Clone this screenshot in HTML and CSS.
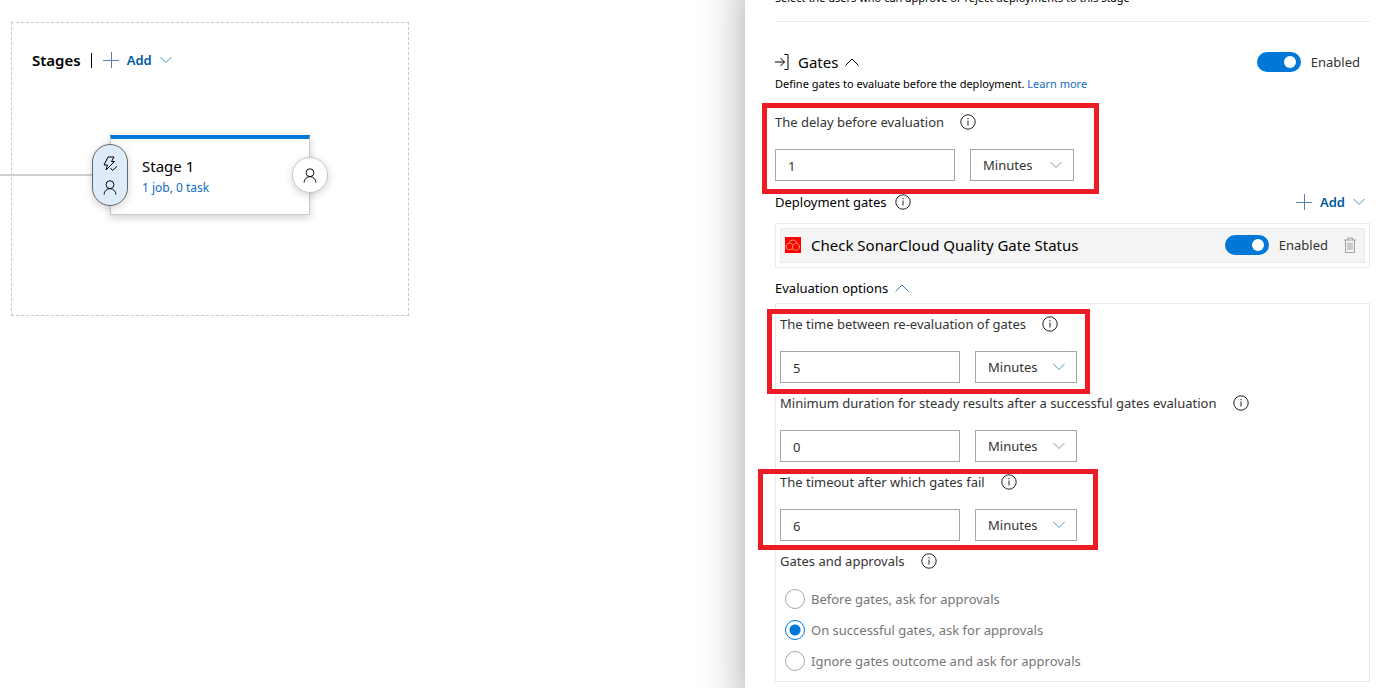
FILE: index.html
```html
<!DOCTYPE html>
<html lang="en">
<head>
<meta charset="utf-8">
<title>Release pipeline - Gates</title>
<link rel="stylesheet" href="styles.css">
</head>
<body>
<svg class="sprite" aria-hidden="true">
  <symbol id="i-plus" viewBox="0 0 16 16"><path d="M8.500 0v16M0 8.500h16"/></symbol>
  <symbol id="i-down" viewBox="0 0 12 8"><path d="M.5 1l5.500 5.500L11.500 1"/></symbol>
  <symbol id="i-up" viewBox="0 0 14 8"><path d="M.5 7.500L7 1l6.500 6.500"/></symbol>
  <symbol id="i-info" viewBox="0 0 16 16"><circle cx="8" cy="8" r="7.200"/><path d="M8 6.500v5M8 4v1.300"/></symbol>
  <symbol id="i-person" viewBox="0 0 14 16"><circle cx="7" cy="5" r="4.200"/><path d="M.7 15.500a6.300 6.300 0 0 1 12.600 0"/></symbol>
</svg>
<div class="workspace">
  <main class="canvas">
    <section class="stages">
      <header class="stages-head">
        <h2 class="stages-title">Stages</h2>
        <span class="divider"></span>
        <button class="add"><svg class="plus"><use href="#i-plus"/></svg>Add<svg class="chevron"><use href="#i-down"/></svg></button>
      </header>
      <span class="connector"></span>
      <article class="stage">
        <h3 class="stage-name">Stage 1</h3>
        <a class="stage-tasks" href="#">1 job, 0 task</a>
        <button class="pre" aria-label="Pre-deployment conditions">
          <svg class="bolt" viewBox="0 0 16 16"><path d="M6 1h6L9.500 5.500h3L4 14l1.500-5H2z"/><path d="M8.500 12l2 2.500L15 10.500"/></svg>
          <svg class="person"><use href="#i-person"/></svg>
        </button>
        <button class="post" aria-label="Post-deployment conditions"><svg class="person"><use href="#i-person"/></svg></button>
      </article>
    </section>
  </main>
  <aside class="panel">
    <p class="note approvals-note">Select the users who can approve or reject deployments to this stage</p>
    <header class="row gates-head">
      <svg class="enter" viewBox="0 0 14 16"><path d="M0 8h9.500M5.500 4l4 4-4 4M9.500.5h3.500v15H9.500"/></svg>
      <h2 class="title">Gates</h2>
      <svg class="caret"><use href="#i-up"/></svg>
      <label class="toggle"><input type="checkbox" checked>Enabled</label>
    </header>
    <p class="note">Define gates to evaluate before the deployment. <a href="#">Learn more</a></p>

    <div class="field delay">
      <span class="mark mark-delay"></span>
      <div class="field-head"><label for="delay">The delay before evaluation</label><svg class="info"><use href="#i-info"/></svg></div>
      <div class="controls">
        <input class="text" id="delay" type="text" value="1">
        <span class="select wide"><select aria-label="Delay unit"><option>Minutes</option></select><svg class="chevron warm"><use href="#i-down"/></svg></span>
      </div>
    </div>

    <div class="row gates-row">
      <h3 class="subtitle">Deployment gates</h3>
      <svg class="info"><use href="#i-info"/></svg>
      <button class="add"><svg class="plus"><use href="#i-plus"/></svg>Add<svg class="chevron"><use href="#i-down"/></svg></button>
    </div>
    <div class="gate-list">
      <div class="row gate">
        <svg class="sonar" viewBox="0 0 16 16"><rect width="16" height="16"/><path d="M4 6.300a4.100 4.100 0 0 1 8.100.2M7.500 10.500A3.300 3.300 0 1 1 4.500 6.200C6.200 6.300 7.400 7 8 8.200M8.800 13.300A3.600 3.600 0 0 1 7.400 10C7.600 8 9.500 6.300 11.700 6.500A3.400 3.400 0 1 1 8.500 12"/></svg>
        <h4 class="title">Check SonarCloud Quality Gate Status</h4>
        <label class="toggle"><input type="checkbox" checked>Enabled</label>
        <button class="trash" aria-label="Delete gate"><svg viewBox="0 0 14 16"><path d="M1 3h12M4.500 3V1h5v2M2.500 3v12.500h9V3M5 5.500v7.500M7 5.500v7.500M9 5.500v7.500"/></svg></button>
      </div>
    </div>
    <div class="row options-row">
      <h3 class="subtitle">Evaluation options</h3>
      <svg class="caret blue"><use href="#i-up"/></svg>
    </div>
    <div class="options">
      <div class="field">
        <span class="mark mark-interval"></span>
        <div class="field-head"><label for="interval">The time between re-evaluation of gates</label><svg class="info"><use href="#i-info"/></svg></div>
        <div class="controls">
          <input class="text" id="interval" type="text" value="5">
          <span class="select"><select aria-label="Interval unit"><option>Minutes</option></select><svg class="chevron"><use href="#i-down"/></svg></span>
        </div>
      </div>
      <div class="field">
        <div class="field-head"><label for="minimum">Minimum duration for steady results after a successful gates evaluation</label><svg class="info"><use href="#i-info"/></svg></div>
        <div class="controls">
          <input class="text" id="minimum" type="text" value="0">
          <span class="select"><select aria-label="Duration unit"><option>Minutes</option></select><svg class="chevron warm"><use href="#i-down"/></svg></span>
        </div>
      </div>
      <div class="field">
        <span class="mark mark-timeout"></span>
        <div class="field-head"><label for="timeout">The timeout after which gates fail</label><svg class="info"><use href="#i-info"/></svg></div>
        <div class="controls">
          <input class="text" id="timeout" type="text" value="6">
          <span class="select"><select aria-label="Timeout unit"><option>Minutes</option></select><svg class="chevron"><use href="#i-down"/></svg></span>
        </div>
      </div>
      <div class="field-head"><span id="order">Gates and approvals</span><svg class="info"><use href="#i-info"/></svg></div>
      <div class="radios" role="radiogroup" aria-labelledby="order">
        <label class="radio"><input type="radio" name="order">Before gates, ask for approvals</label>
        <label class="radio"><input type="radio" name="order" checked>On successful gates, ask for approvals</label>
        <label class="radio"><input type="radio" name="order">Ignore gates outcome and ask for approvals</label>
      </div>
    </div>
  </aside>
</div>
</body>
</html>
```
FILE: styles.css
```css
* { box-sizing: border-box; }
body {
  margin: 0;
  background: #fff;
  color: #000;
  font: 13px/20px "Noto Sans", "Open Sans", sans-serif;
}
h2, h3, h4, p { margin: 0; font-weight: 400; }
a { color: #106ebe; text-decoration: none; }
button, input, select { font: inherit; color: inherit; }
button { padding: 0; border: 0; background: none; }
svg { flex: none; fill: none; stroke: currentColor; stroke-width: 1; }
.sprite { position: absolute; width: 0; height: 0; }

.workspace {
  display: grid;
  grid-template-columns: minmax(0, 745fr) minmax(0, 654fr);
  min-height: 100vh;
  overflow: hidden;
}

/* Pipeline canvas */
.canvas { padding: 22px 11px; }
.stages {
  position: relative;
  width: 398px;
  height: 294px;
  padding: 26px 20px;
  border: 1px dashed #c8c8c8;
}
.stages-head { display: flex; align-items: center; height: 22px; }
.stages-title { font-size: 15px; font-weight: 600; }
.divider { width: 1px; height: 15px; margin: 0 11px 0 10px; background: #000; }
.add { display: flex; align-items: center; gap: 8px; color: #005a9e; font-weight: 600; }
.plus { width: 16px; height: 16px; color: #5b7fae; }
.chevron { width: 12px; height: 8px; color: #4a93c4; }
.chevron.warm { color: #a98d7c; }

.connector {
  position: absolute;
  top: 151px;
  left: -12px;
  width: 100px;
  height: 2px;
  background: #d0d0d0;
}
.stage {
  position: absolute;
  top: 112px;
  left: 98px;
  width: 200px;
  height: 80px;
  padding: 15px 31px;
  border: 1px solid #c8c8c8;
  border-top: 4px solid #0078d7;
  background: #fff;
  box-shadow: 0 3px 8px rgba(0, 0, 0, .18);
}
.stage-name { font-size: 15px; line-height: 24px; }
.stage-tasks { display: block; font-size: 12px; }
.pre, .post {
  position: absolute;
  display: flex;
  flex-direction: column;
  align-items: center;
  justify-content: center;
  width: 36px;
  box-shadow: 0 2px 8px rgba(0, 0, 0, .18);
}
.pre {
  top: 5px;
  left: -19px;
  height: 62px;
  gap: 8px;
  border: 1px solid #666;
  border-radius: 18px;
  background: #deecf9;
}
.post {
  top: 18px;
  right: -19px;
  height: 36px;
  border: 1px solid #c8c8c8;
  border-radius: 50%;
  background: #fff;
}
.bolt { width: 16px; height: 16px; }
.person { width: 14px; height: 15px; }

/* Details panel */
.panel {
  position: relative;
  padding: 0 29px 6px 30px;
  background: #fff;
  box-shadow: 24px 0 42px 24px rgba(0, 0, 0, .36);
}
.note { font-size: 11px; line-height: 16px; }
.approvals-note { margin-top: -10px; padding-bottom: 15px; border-bottom: 1px solid #eaeaea; }
.row { display: flex; align-items: center; }
.title { font-size: 15px; line-height: 22px; }
.gates-head { height: 20px; margin: 30px 0 4px; }
.enter { width: 14px; height: 16px; margin-right: 9px; }
.caret { width: 14px; height: 8px; margin-left: 7px; }
.caret.blue { color: #3b7cc4; }
.toggle { display: flex; align-items: center; gap: 10px; margin-left: auto; color: #333; }
.gates-head .toggle { margin-right: 10px; }
.toggle input {
  appearance: none;
  width: 44px;
  height: 20px;
  margin: 0;
  padding: 4px 5px;
  border-radius: 10px;
  background: #0078d7;
}
.toggle input::before {
  content: "";
  display: block;
  width: 12px;
  height: 12px;
  margin-left: auto;
  border-radius: 50%;
  background: #fff;
}

.field { position: relative; margin-bottom: 10px; }
.delay { margin-top: 20px; }
.field-head { display: flex; align-items: center; gap: 16px; height: 20px; color: #333; }
.info { width: 16px; height: 16px; color: #222; }
.controls { display: flex; gap: 15px; margin-top: 17px; color: #333; }
.text {
  width: 180px;
  height: 32px;
  padding: 2px 12px 0;
  border: 1px solid #a6a6a6;
  background: #fff;
}
.select { position: relative; width: 102px; height: 32px; }
.select.wide { width: 104px; }
.select select {
  appearance: none;
  width: 100%;
  height: 100%;
  padding: 0 12px;
  border: 1px solid #a6a6a6;
  border-radius: 0;
  background: #fff;
}
.select .chevron { position: absolute; top: 12px; right: 12px; pointer-events: none; }

.gates-row { height: 22px; margin-bottom: 10px; }
.gates-row .info { margin-left: 8px; }
.gates-row .add { margin-left: auto; margin-right: 5px; }
.subtitle { font-size: 13px; }
.gate-list { padding: 4px; border: 1px solid #eaeaea; }
.gate { height: 35px; padding: 0 7px 2px 4px; border: 1px solid #eaeaea; background: #f4f4f4; }
.sonar { width: 16px; height: 16px; margin-right: 10px; color: #ff9a5c; }
.sonar rect { fill: #f00; stroke: none; }
.trash { margin-left: 15px; color: #a0a0a0; }
.trash svg { display: block; width: 14px; height: 16px; }
.options-row { height: 20px; margin: 10px 0 5px; }
.options { padding: 10px 4px; border: 1px solid #eaeaea; }

.radios { display: grid; gap: 11px; margin: 18px 5px 0; }
.radio { display: flex; align-items: center; gap: 6px; color: #767676; }
.radio input {
  appearance: none;
  width: 20px;
  height: 20px;
  margin: 0;
  border: 1px solid #a6a6a6;
  border-radius: 50%;
  background: #fff;
}
.radio input:checked { border-color: #0078d7; background: radial-gradient(circle, #0078d7 5px, #fff 6px); }

/* Highlight frames drawn over the fields */
.mark { position: absolute; border: 5px solid #ed1c24; pointer-events: none; }
.mark-delay { top: -9px; left: -13px; width: 337px; height: 91px; }
.mark-interval { top: -5px; left: -13px; width: 323px; height: 85px; }
.mark-timeout { top: -3px; left: -22px; width: 340px; height: 81px; }
```
